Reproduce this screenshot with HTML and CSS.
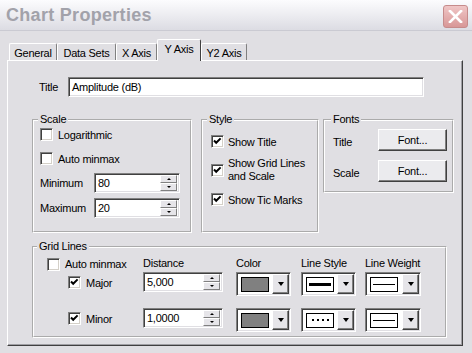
FILE: index.html
```html
<!DOCTYPE html>
<html lang="en">
<head>
    <meta charset="UTF-8">
    <title>Chart Properties</title>
    <link rel="stylesheet" href="styles.css">
</head>
<body>
    <!-- Заголовок окна -->
    <div class="titlebar">
        <span class="caption">Chart Properties</span>
        <div class="close">
            <svg width="15" height="13" viewBox="0 0 15 13"><path d="M2 1L13 12M13 1L2 12" stroke="#fff" stroke-width="2.6" stroke-linecap="square"/></svg>
        </div>
    </div>

    <!-- Вкладки -->
    <div class="tabs">
        <div class="tab w-general">General</div>
        <div class="tab w-data">Data Sets</div>
        <div class="tab w-x">X Axis</div>
        <div class="tab active w-y">Y Axis</div>
        <div class="tab w-y2">Y2 Axis</div>
    </div>

    <div class="panel">
        <div class="title-row">
            <span class="title-label">Title</span>
            <div class="field title-field">Amplitude (dB)</div>
        </div>

        <div class="groups">
            <fieldset class="group scale">
                <legend>Scale</legend>
                <div class="scale-body">
                    <div class="check-row"><span class="box"></span>Logarithmic</div>
                    <div class="check-row second"><span class="box"></span>Auto minmax</div>
                    <div class="spin-row first">
                        <span class="spin-label">Minimum</span>
                        <div class="field spin-field minmax"><span class="value">80</span><span class="spin"><span class="spin-btn"><i class="up"></i></span><span class="spin-btn"><i class="down"></i></span></span></div>
                    </div>
                    <div class="spin-row">
                        <span class="spin-label">Maximum</span>
                        <div class="field spin-field minmax"><span class="value">20</span><span class="spin"><span class="spin-btn"><i class="up"></i></span><span class="spin-btn"><i class="down"></i></span></span></div>
                    </div>
                </div>
            </fieldset>

            <fieldset class="group style">
                <legend>Style</legend>
                <div class="style-body">
                    <div class="check-row"><span class="box"><svg width="11" height="11"><path d="M2 4.5L4.2 6.8L8.6 2.4" fill="none" stroke="#000" stroke-width="2"/></svg></span>Show Title</div>
                    <div class="check-row two-line"><span class="box"><svg width="11" height="11"><path d="M2 4.5L4.2 6.8L8.6 2.4" fill="none" stroke="#000" stroke-width="2"/></svg></span>Show Grid Lines<br>and Scale</div>
                    <div class="check-row tic"><span class="box"><svg width="11" height="11"><path d="M2 4.5L4.2 6.8L8.6 2.4" fill="none" stroke="#000" stroke-width="2"/></svg></span>Show Tic Marks</div>
                </div>
            </fieldset>

            <fieldset class="group fonts">
                <legend>Fonts</legend>
                <div class="fonts-body">
                    <div class="font-row"><span class="font-label">Title</span><div class="btn">Font...</div></div>
                    <div class="font-row second"><span class="font-label">Scale</span><div class="btn">Font...</div></div>
                </div>
            </fieldset>
        </div>

        <fieldset class="group grid-lines">
            <legend>Grid Lines</legend>
            <div class="grid-body">
                <div class="grid-row head">
                    <div class="c1 auto-check"><div class="check-row"><span class="box"></span>Auto minmax</div></div>
                    <div class="c2">Distance</div>
                    <div class="c3">Color</div>
                    <div class="c4">Line Style</div>
                    <div class="c5">Line Weight</div>
                </div>
                <div class="grid-row">
                    <div class="c1 sub-check"><div class="check-row"><span class="box"><svg width="11" height="11"><path d="M2 4.5L4.2 6.8L8.6 2.4" fill="none" stroke="#000" stroke-width="2"/></svg></span>Major</div></div>
                    <div class="c2"><div class="field spin-field distance"><span class="value">5,000</span><span class="spin"><span class="spin-btn"><i class="up"></i></span><span class="spin-btn"><i class="down"></i></span></span></div></div>
                    <div class="c3"><div class="combo"><span class="swatch color-swatch"></span><span class="drop"><i></i></span></div></div>
                    <div class="c4"><div class="combo"><span class="swatch"><i class="line thick"></i></span><span class="drop"><i></i></span></div></div>
                    <div class="c5"><div class="combo wide"><span class="swatch"><i class="line thin"></i></span><span class="drop"><i></i></span></div></div>
                </div>
                <div class="grid-row minor">
                    <div class="c1 sub-check"><div class="check-row"><span class="box"><svg width="11" height="11"><path d="M2 4.5L4.2 6.8L8.6 2.4" fill="none" stroke="#000" stroke-width="2"/></svg></span>Minor</div></div>
                    <div class="c2"><div class="field spin-field distance"><span class="value">1,0000</span><span class="spin"><span class="spin-btn"><i class="up"></i></span><span class="spin-btn"><i class="down"></i></span></span></div></div>
                    <div class="c3"><div class="combo"><span class="swatch color-swatch"></span><span class="drop"><i></i></span></div></div>
                    <div class="c4"><div class="combo"><span class="swatch"><i class="line dotted"></i></span><span class="drop"><i></i></span></div></div>
                    <div class="c5"><div class="combo wide"><span class="swatch"><i class="line thin"></i></span><span class="drop"><i></i></span></div></div>
                </div>
            </div>
        </fieldset>
    </div>
</body>
</html>
```
FILE: styles.css
```css
* {
    box-sizing: border-box;
}

body {
    margin: 0;
    width: 472px;
    height: 353px;
    overflow: hidden;
    background: #e0dfe3; /* серый фон окна */
    font-family: "Liberation Sans", Arial, sans-serif;
    font-size: 11px;
    letter-spacing: -0.25px;
    color: #000;
}

/* Заголовок */
.titlebar {
    height: 31px;
    display: flex;
    align-items: center;
    justify-content: space-between;
    padding: 0 4px 0 6px;
    background: linear-gradient(#fcfcfe, #eeeef2 45%, #dcdce3);
    border-bottom: 1px solid #cacad2;
}

.caption {
    font-size: 18px;
    font-weight: bold;
    letter-spacing: 0.3px;
    color: #a2a2aa;
}

.close {
    width: 25px;
    height: 23px;
    margin-top: 2px;
    border: 1px solid #c68b8b;
    border-radius: 3px;
    background: linear-gradient(#f0c6c6, #d89797);
    display: flex;
    align-items: center;
    justify-content: center;
}

/* Вкладки */
.tabs {
    display: flex;
    align-items: flex-end;
    height: 21px;
    margin: 8px 0 0 9px;
    position: relative;
    z-index: 1;
}

.tab {
    height: 17px;
    border-top: 1px solid #fff;
    border-left: 1px solid #fff;
    border-right: 1px solid #808080;
    border-radius: 2px 2px 0 0;
    display: flex;
    align-items: center;
    justify-content: center;
    padding-top: 1px;
}

.tab.active {
    height: 22px;
    margin-bottom: -1px;
    align-items: flex-start;
    padding-top: 3px;
    border-right-color: #404040;
    background: #e0dfe3;
}

.w-general { width: 48px; }
.w-data { width: 59px; }
.w-x { width: 41px; }
.w-y { width: 44px; }
.w-y2 { width: 46px; }

/* Панель вкладки */
.panel {
    margin-left: 7px;
    width: 456px;
    height: 286px;
    border: 1px solid;
    border-color: #fff #404040 #404040 #fff;
    box-shadow: inset -1px -1px 0 #a09fa4;
    padding-top: 16px;
}

.title-row {
    display: flex;
    align-items: center;
    height: 20px;
    padding-left: 31px;
}

.title-label {
    width: 29px;
}

/* Поле ввода */
.field {
    height: 20px;
    background: #fff;
    border: 1px solid;
    border-color: #808080 #fff #fff #808080;
    box-shadow: inset 1px 1px 0 #404040, inset -1px -1px 0 #e0dfe3;
    display: flex;
    align-items: center;
    padding-left: 3px;
}

.title-field {
    width: 356px;
}

.spin-field .value {
    flex: 1;
}

.spin {
    width: 17px;
    height: 16px;
    margin-right: 2px;
    display: flex;
    flex-direction: column;
}

.spin-btn {
    flex: 1;
    background: #e6e5e9;
    border: 1px solid;
    border-color: #fff #808080 #808080 #fff;
    display: flex;
    align-items: center;
    justify-content: center;
}

.spin-btn i {
    width: 1px;
    border-left: 2px solid transparent;
    border-right: 2px solid transparent;
}

.spin-btn .up {
    border-bottom: 2px solid #000;
}

.spin-btn .down {
    border-top: 2px solid #000;
}

.minmax {
    width: 86px;
}

.distance {
    width: 80px;
}

/* Группы */
.groups {
    display: flex;
    align-items: flex-start;
    margin-top: 16px;
    padding-left: 24px;
}

.group {
    margin: 0;
    padding: 0;
    min-width: 0;
    border: 2px groove #fff;
}

.group legend {
    padding: 0 2px;
    margin-left: 4px;
    line-height: 13px;
}

.scale {
    width: 160px;
    height: 120px;
    margin-right: 9px;
}

.style {
    width: 118px;
    height: 120px;
    margin-right: 4px;
}

.fonts {
    width: 131px;
    height: 80px;
}

.fonts legend {
    margin-left: 6px;
}

.grid-lines {
    width: 415px;
    height: 98px;
    margin: 7px 0 0 24px;
}

.grid-lines legend {
    margin-left: 3px;
}

/* Флажки */
.check-row {
    display: flex;
    align-items: center;
    gap: 5px;
    height: 13px;
    white-space: nowrap;
}

.box {
    flex: none;
    width: 13px;
    height: 13px;
    background: #fff;
    border: 1px solid;
    border-color: #808080 #fff #fff #808080;
    box-shadow: inset 1px 1px 0 #404040, inset -1px -1px 0 #d4d0c8;
}

.box svg {
    display: block;
}

.scale-body {
    padding: 2px 0 0 6px;
}

.scale-body .second {
    margin-top: 11px;
}

.spin-row {
    display: flex;
    align-items: center;
    margin-top: 5px;
}

.spin-row.first {
    margin-top: 8px;
}

.spin-label {
    width: 54px;
}

.style-body {
    padding: 9px 0 0 8px;
}

.style-body .check-row {
    gap: 4px;
}

.style-body .two-line {
    height: 26px;
    line-height: 13px;
    margin-top: 9px;
}

.style-body .tic {
    margin-top: 10px;
}

/* Кнопки шрифтов */
.fonts-body {
    padding: 3px 0 0 8px;
}

.font-row {
    display: flex;
    align-items: center;
}

.font-row.second {
    margin-top: 9px;
}

.font-label {
    width: 45px;
    padding-top: 3px;
}

.btn {
    width: 69px;
    height: 22px;
    background: #ebebee;
    border: 1px solid;
    border-color: #fff #404040 #404040 #fff;
    box-shadow: inset -1px -1px 0 #808080;
    display: flex;
    align-items: center;
    justify-content: center;
}

/* Линии сетки */
.grid-body {
    padding-left: 13px;
}

.grid-row {
    display: flex;
    align-items: flex-start;
    height: 24px;
}

.grid-row.head {
    height: 19px;
    align-items: center;
}

.grid-row.minor {
    margin-top: 12px;
}

.c1 { width: 96px; }
.c2 { width: 93px; }
.c3 { width: 65px; }
.c4 { width: 64px; }
.c5 { width: 56px; }

.auto-check {
    margin-top: 3px;
}

.sub-check {
    margin-top: 4px;
    padding-left: 21px;
}

/* Выпадающие списки */
.combo {
    width: 55px;
    height: 24px;
    background: #fff;
    border: 1px solid;
    border-color: #808080 #fff #fff #808080;
    box-shadow: inset 1px 1px 0 #404040, inset -1px -1px 0 #e0dfe3;
    display: flex;
    align-items: center;
    justify-content: space-between;
    padding: 1px 1px 1px 4px;
}

.combo.wide {
    width: 56px;
}

.swatch {
    width: 28px;
    height: 15px;
    border: 1px solid #000;
    background: #fff;
    display: flex;
    align-items: center;
    justify-content: center;
}

.color-swatch {
    background: #808080;
}

.line {
    display: block;
    width: 22px;
    background: #000;
}

.line.thick {
    height: 3px;
}

.line.thin {
    height: 1px;
}

.line.dotted {
    width: 17px;
    height: 2px;
    background: repeating-linear-gradient(90deg, #000 0 2px, transparent 2px 5px);
}

.drop {
    width: 17px;
    height: 20px;
    background: #e6e5e9;
    border: 1px solid;
    border-color: #fff #404040 #404040 #fff;
    box-shadow: inset -1px -1px 0 #808080;
    display: flex;
    align-items: center;
    justify-content: center;
}

.drop i {
    width: 1px;
    border-left: 3px solid transparent;
    border-right: 3px solid transparent;
    border-top: 4px solid #000;
}
```
